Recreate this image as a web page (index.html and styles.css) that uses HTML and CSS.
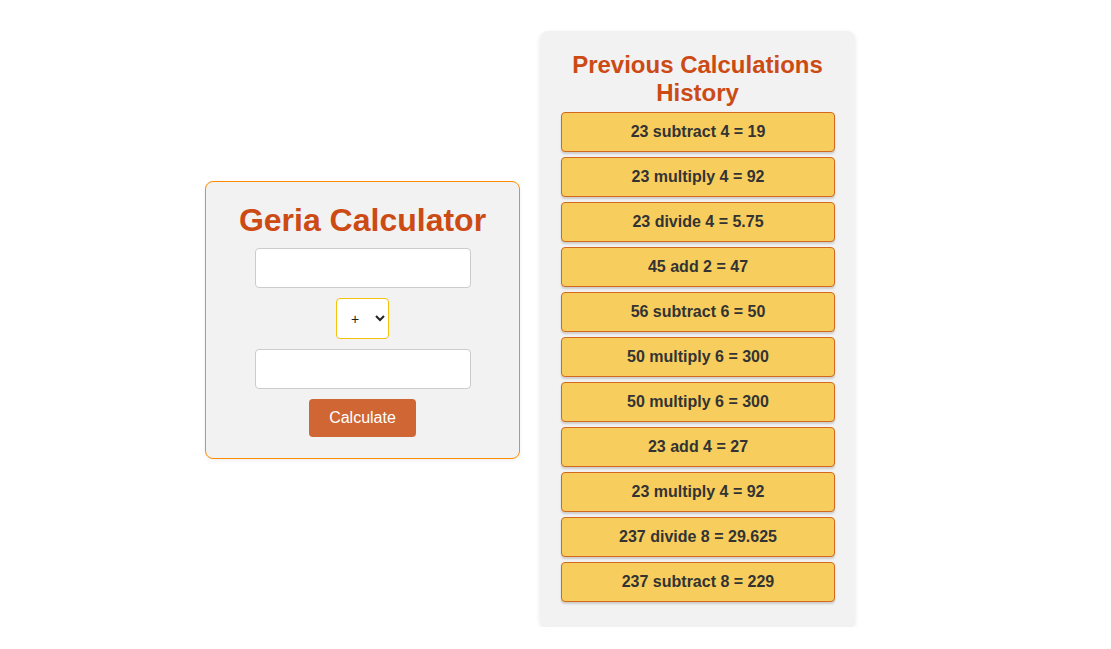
FILE: index.html
```html
<!DOCTYPE html>
<html lang="en">
<head>
<meta charset="utf-8">
<title>Geria Calculator</title>
<link rel="stylesheet" href="styles.css">
</head>
<body>
<main class="layout">
  <section class="calc-card">
    <h1 class="calc-title">Geria Calculator</h1>
    <input class="num-input" type="text">
    <select class="op-select">
      <option>+</option>
      <option>-</option>
      <option>*</option>
      <option>/</option>
    </select>
    <input class="num-input" type="text">
    <button class="calc-btn">Calculate</button>
  </section>
  <section class="history-card">
    <h2 class="history-title">Previous Calculations History</h2>
    <ul class="history-list">
      <li class="history-item">23 subtract 4 = 19</li>
      <li class="history-item">23 multiply 4 = 92</li>
      <li class="history-item">23 divide 4 = 5.75</li>
      <li class="history-item">45 add 2 = 47</li>
      <li class="history-item">56 subtract 6 = 50</li>
      <li class="history-item">50 multiply 6 = 300</li>
      <li class="history-item">50 multiply 6 = 300</li>
      <li class="history-item">23 add 4 = 27</li>
      <li class="history-item">23 multiply 4 = 92</li>
      <li class="history-item">237 divide 8 = 29.625</li>
      <li class="history-item">237 subtract 8 = 229</li>
    </ul>
  </section>
</main>
</body>
</html>
```

FILE: styles.css
```css
* { box-sizing: border-box; }

body {
  margin: 0;
  background: #ffffff;
  font-family: "Liberation Sans", Arial, sans-serif;
}

.layout {
  display: flex;
  justify-content: center;
  align-items: center;
  gap: 20px;
  padding: 31px 51px 0 0;
}

.calc-card {
  width: 315px;
  margin-bottom: 18px;
  background: #f2f2f2;
  border: 1px solid #ff8c00;
  border-radius: 8px;
  box-shadow: 0 2px 4px rgba(0, 0, 0, 0.06);
  padding: 20px 20px 21px;
  display: flex;
  flex-direction: column;
  align-items: center;
}

.calc-title {
  margin: 0 0 9px;
  font-size: 32px;
  line-height: 37px;
  font-weight: bold;
  color: #cc4b14;
}

.num-input {
  width: 216px;
  height: 40px;
  padding: 10px;
  font-size: 16px;
  font-family: inherit;
  background: #ffffff;
  border: 1px solid #cccccc;
  border-radius: 4px;
}

.op-select {
  width: 53px;
  height: 41px;
  margin: 10px 0;
  padding: 0 6px 0 10px;
  font-size: 14px;
  font-family: inherit;
  background: #ffffff;
  border: 1px solid #f4c20d;
  border-radius: 4px;
  color: #222;
}

.calc-btn {
  margin-top: 10px;
  padding: 10px 20px;
  height: 38px;
  font-size: 16px;
  line-height: 18px;
  font-family: inherit;
  color: #ffffff;
  background: #cf6633;
  border: none;
  border-radius: 4px;
}

.history-card {
  width: 315px;
  background: #f2f2f2;
  border-radius: 8px;
  box-shadow: 0 2px 5px rgba(0, 0, 0, 0.1);
  padding: 20px;
}

.history-title {
  margin: 0 0 5px;
  font-size: 24px;
  line-height: 28px;
  font-weight: bold;
  text-align: center;
  color: #cc4b14;
}

.history-list {
  list-style: none;
  margin: 0;
  padding: 0 0 0 1px;
}

.history-item {
  height: 40px;
  margin-bottom: 5px;
  padding: 10px;
  font-size: 16px;
  line-height: 18px;
  font-weight: bold;
  text-align: center;
  color: #333333;
  background: #f7ce5d;
  border: 1px solid #d2691e;
  border-radius: 4px;
  box-shadow: 0 2px 2px rgba(0, 0, 0, 0.15);
}
```
